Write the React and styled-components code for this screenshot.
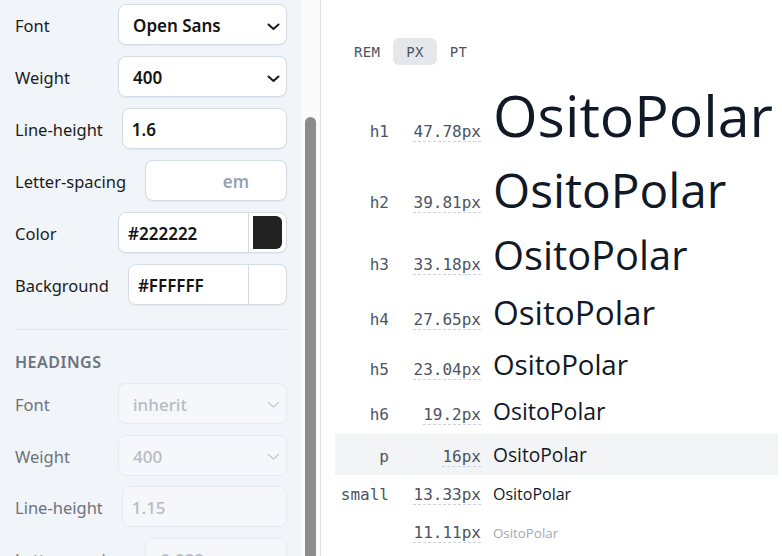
import React, { useLayoutEffect, useRef } from 'react';
import styled, { createGlobalStyle, css } from 'styled-components';

const Global = createGlobalStyle`
  html, body { margin: 0; padding: 0; height: 100%; overflow: hidden; background: #fff; }
  body { font-family: "Noto Sans", sans-serif; }
  #root { height: 100%; }
  * { box-sizing: border-box; }
`;

const Shell = styled.div`
  display: flex;
  height: 556px;
  overflow: hidden;
`;

const Sidebar = styled.aside`
  flex: 0 0 321px;
  width: 321px;
  height: 100%;
  display: flex;
  border-right: 1px solid #dde3eb;
`;

const ScrollArea = styled.div`
  position: relative;
  flex: 1;
  min-width: 0;
  height: 100%;
  overflow: hidden;
  background: #f1f4f9;
`;

const Rail = styled.div`
  flex: 0 0 19px;
  display: flex;
  flex-direction: column;
  padding: 117px 4px 0;
  background: #fafafa;
`;

const Thumb = styled.div`
  flex: 1;
  background: #8c8c8c;
  border-radius: 6px 6px 0 0;
`;

const SideContent = styled.div`
  padding: 14px 14px 24px 15px;
`;

const Section = styled.section`
  display: flex;
  flex-direction: column;
  gap: ${p => (p.$divided ? '10.8px' : '11px')};
  ${p => p.$divided && css`
    margin-top: 24px;
    border-top: 1px solid #dfe4ea;
    padding-top: 21px;
  `}
`;

const SectionTitle = styled.h3`
  margin: 0;
  height: 21px;
  line-height: 21px;
  padding-top: 1px;
  font-size: 16px;
  font-weight: 600;
  letter-spacing: 0.5px;
  text-transform: uppercase;
  color: #6b7280;
`;

const Row = styled.div`
  display: flex;
  align-items: center;
  gap: 19px;
`;

const Label = styled.label`
  min-width: 84px;
  padding-top: 2px;
  font-size: 16.5px;
  white-space: nowrap;
  color: ${p => (p.$muted ? '#6e737b' : '#1a1c20')};
`;

const Field = styled.div`
  position: relative;
  flex: 1;
  min-width: 0;
  height: 41px;
  display: flex;
  align-items: center;
  background: ${p => (p.$muted ? '#f5f7fa' : '#ffffff')};
  border: 1px solid ${p => (p.$muted ? '#e7ebf0' : '#d5dce6')};
  border-radius: 8px;
  box-shadow: ${p => (p.$muted ? 'none' : '0 1px 2px rgba(16, 24, 40, 0.05)')};
  overflow: hidden;
`;

const controlText = css`
  font-family: "Noto Sans", sans-serif;
  font-size: 17px;
  font-weight: ${p => (p.$muted ? 500 : 600)};
  color: ${p => (p.$muted ? '#b6bbc3' : '#141414')};
`;

const Select = styled.select`
  appearance: none;
  -webkit-appearance: none;
  border: 0;
  outline: none;
  background: transparent;
  width: 100%;
  height: 100%;
  padding: 2px 34px 0 14px;
  ${controlText}
`;

const Input = styled.input`
  flex: 1;
  min-width: 0;
  height: 100%;
  border: 0;
  outline: none;
  background: transparent;
  padding: 2px 0 0 9px;
  ${controlText}
`;

const Unit = styled.span`
  padding: 2px 37px 0 0;
  font-size: 17px;
  font-weight: 600;
  color: #98a2b3;
`;

const Swatch = styled.div`
  flex: 0 0 38px;
  height: 100%;
  padding: 3px 4px;
  border-left: 1px solid #d5dce6;
  &::after {
    content: '';
    display: block;
    height: 100%;
    background: ${p => p.$color};
    border-radius: 0 6px 6px 0;
  }
`;

const Chevron = styled.svg`
  position: absolute;
  right: 6px;
  top: 50%;
  margin-top: -2px;
  pointer-events: none;
`;

const Main = styled.main`
  flex: 1;
  min-width: 0;
  height: 556px;
  overflow: hidden;
  padding: 38px 4px 0 14px;
  background: #fff;
`;

const Units = styled.div`
  display: flex;
  margin-left: 6px;
`;

const UnitButton = styled.button`
  height: 27px;
  padding: 0 13px;
  border: 0;
  border-radius: 6px;
  background: ${p => (p.$active ? '#e5e7eb' : 'transparent')};
  font-family: "DejaVu Sans Mono", monospace;
  font-size: 14px;
  letter-spacing: 0.3px;
  color: #4b5563;
`;

const Scale = styled.div`
  margin-top: 11px;
  display: flex;
  flex-direction: column;
`;

const ScaleRow = styled.div`
  display: grid;
  grid-template-columns: 48px 80px 1fr;
  column-gap: 12px;
  align-items: baseline;
  padding: 10.75px 0 10.75px 6px;
  background: ${p => (p.$active ? '#f3f4f6' : 'transparent')};
`;

const mono = css`
  justify-self: end;
  font-family: "DejaVu Sans Mono", monospace;
  font-size: 16px;
  line-height: 1;
  color: #4b5563;
`;

const Tag = styled.span`
  ${mono}
`;

const Size = styled.span`
  ${mono}
  text-decoration: underline dashed #cdd2da;
  text-decoration-thickness: 1px;
  text-underline-offset: 4px;
`;

const Preview = styled.span`
  font-family: "Open Sans", sans-serif;
  font-weight: 400;
  line-height: 1;
  white-space: nowrap;
  color: ${p => (p.$faint ? '#a3a8b1' : '#111827')};
`;

function ChevronIcon({ muted }) {
  return (
    <Chevron width="13" height="8" viewBox="0 0 13 8" aria-hidden="true">
      <path
        d="M1.5 1.5 L6.5 6 L11.5 1.5"
        fill="none"
        stroke={muted ? '#c6cbd2' : '#1a1a1a'}
        strokeWidth={muted ? 1.4 : 2}
        strokeLinecap="round"
        strokeLinejoin="round"
      />
    </Chevron>
  );
}

function SelectField({ value, options, muted }) {
  return (
    <Field $muted={muted}>
      <Select $muted={muted} defaultValue={value}>
        {options.map(o => (
          <option key={o}>{o}</option>
        ))}
      </Select>
      <ChevronIcon muted={muted} />
    </Field>
  );
}

const scale = [
  { tag: 'h1', size: '47.78px', px: 57.33 },
  { tag: 'h2', size: '39.81px', px: 47.78 },
  { tag: 'h3', size: '33.18px', px: 39.81 },
  { tag: 'h4', size: '27.65px', px: 33.18 },
  { tag: 'h5', size: '23.04px', px: 27.65 },
  { tag: 'h6', size: '19.2px', px: 23.04 },
  { tag: 'p', size: '16px', px: 19.2, active: true },
  { tag: 'small', size: '13.33px', px: 16 },
  { tag: '', size: '11.11px', px: 13.33, faint: true },
];

export default function App() {
  const scrollRef = useRef(null);
  const fontRowRef = useRef(null);

  useLayoutEffect(() => {
    const el = scrollRef.current;
    if (el && fontRowRef.current) {
      el.scrollTop = fontRowRef.current.offsetTop - 4;
    }
  }, []);

  return (
    <>
      <Global />
      <Shell>
        <Sidebar>
          <ScrollArea ref={scrollRef}>
            <SideContent>
              <Section>
                <SectionTitle>Body</SectionTitle>
                <Row>
                  <Label>Size</Label>
                  <Field>
                    <Input defaultValue="16" />
                    <Unit>px</Unit>
                  </Field>
                </Row>
                <Row>
                  <Label>Scale</Label>
                  <SelectField value="1.2 — Minor third" options={['1.2 — Minor third', '1.25 — Major third']} />
                </Row>
                <Row ref={fontRowRef}>
                  <Label>Font</Label>
                  <SelectField value="Open Sans" options={['Open Sans', 'Inter', 'Roboto', 'Lato']} />
                </Row>
                <Row>
                  <Label>Weight</Label>
                  <SelectField value="400" options={['300', '400', '500', '600', '700']} />
                </Row>
                <Row>
                  <Label>Line-height</Label>
                  <Field>
                    <Input defaultValue="1.6" />
                  </Field>
                </Row>
                <Row>
                  <Label>Letter-spacing</Label>
                  <Field>
                    <Input defaultValue="" />
                    <Unit>em</Unit>
                  </Field>
                </Row>
                <Row>
                  <Label>Color</Label>
                  <Field>
                    <Input defaultValue="#222222" />
                    <Swatch $color="#222222" />
                  </Field>
                </Row>
                <Row>
                  <Label>Background</Label>
                  <Field>
                    <Input defaultValue="#FFFFFF" />
                    <Swatch $color="#FFFFFF" />
                  </Field>
                </Row>
              </Section>

              <Section $divided>
                <SectionTitle>Headings</SectionTitle>
                <Row>
                  <Label $muted>Font</Label>
                  <SelectField muted value="inherit" options={['inherit', 'Open Sans']} />
                </Row>
                <Row>
                  <Label $muted>Weight</Label>
                  <SelectField muted value="400" options={['400', '600', '700']} />
                </Row>
                <Row>
                  <Label $muted>Line-height</Label>
                  <Field $muted>
                    <Input $muted defaultValue="1.15" />
                  </Field>
                </Row>
                <Row>
                  <Label $muted>Letter-spacing</Label>
                  <Field $muted>
                    <Input $muted defaultValue="-0.022" />
                    <Unit>em</Unit>
                  </Field>
                </Row>
              </Section>
            </SideContent>
          </ScrollArea>
          <Rail>
            <Thumb />
          </Rail>
        </Sidebar>

        <Main>
          <Units>
            <UnitButton>REM</UnitButton>
            <UnitButton $active>PX</UnitButton>
            <UnitButton>PT</UnitButton>
          </Units>
          <Scale>
            {scale.map(r => (
              <ScaleRow key={r.size} $active={r.active}>
                <Tag>{r.tag}</Tag>
                <Size>{r.size}</Size>
                <Preview $faint={r.faint} style={{ fontSize: `${r.px}px` }}>
                  OsitoPolar
                </Preview>
              </ScaleRow>
            ))}
          </Scale>
        </Main>
      </Shell>
    </>
  );
}
